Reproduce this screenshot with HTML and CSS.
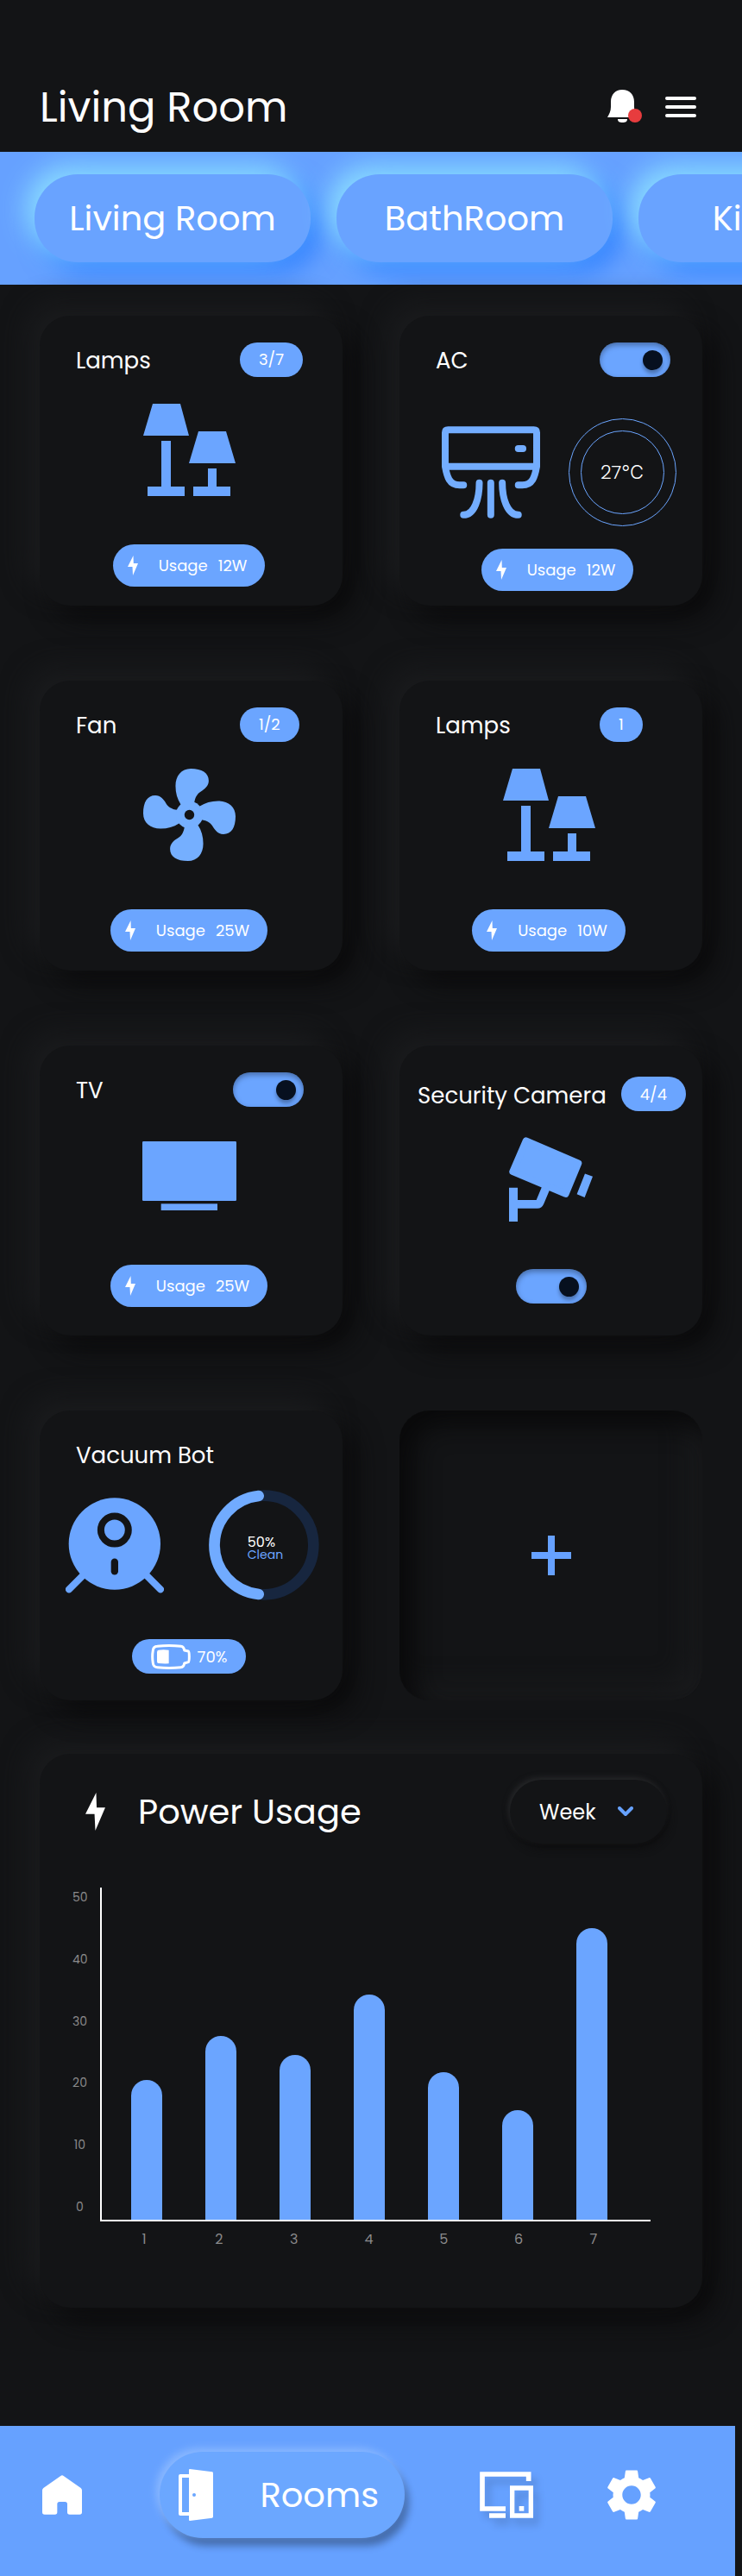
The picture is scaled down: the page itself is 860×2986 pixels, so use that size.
FILE: index.html
```html
<!DOCTYPE html>
<html lang="en">
<head>
<meta charset="utf-8">
<meta name="viewport" content="width=device-width, initial-scale=1">
<title>Living Room</title>
<link rel="stylesheet" href="styles.css">
</head>
<body>
<svg class="defs" width="0" height="0" aria-hidden="true">
  <symbol id="bolt" viewBox="0 0 12 23"><path d="M6.500 0L0 13H5.500L6 23L12 9H6.800Z"/></symbol>
  <symbol id="lamps" viewBox="0 0 107 107"><path d="M11 0H43L53 37H0ZM21 43H32V96H48V107H5V96H21ZM64 32H96L107 69H53ZM75 75H85V96H101V107H58V96H75Z"/></symbol>
</svg>

<header class="topbar">
  <h1 class="topbar-title">Living Room</h1>
  <div class="topbar-actions">
    <button class="icon-button" type="button" aria-label="Notifications">
      <svg width="42" height="40" viewBox="0 0 42 40"><path fill="#fff" d="M17 0C26 0 31 6 31 14V20C31 25 33 28 34 32H0C2 28 4 25 4 20V14C4 6 9 0 17 0ZM12 34H23C23 37 21 38 17.500 38S12 37 12 34Z"/><circle cx="32" cy="30" r="8" fill="#e73c3e"/></svg>
    </button>
    <button class="icon-button" type="button" aria-label="Menu">
      <svg width="36" height="24" viewBox="0 0 36 24"><path d="M2 2H34M2 12H34M2 22H34" stroke="#fff" stroke-width="4" stroke-linecap="round"/></svg>
    </button>
  </div>
</header>

<nav class="rooms" aria-label="Rooms">
  <a class="room" href="#living">Living Room</a>
  <a class="room" href="#bath">BathRoom</a>
  <a class="room" href="#kitchen">Kitchen</a>
</nav>

<main class="content">
  <section class="devices">
    <article class="card">
      <div class="card-head"><h2 class="card-title">Lamps</h2><span class="badge">3/7</span></div>
      <div class="card-figure"><svg class="glyph" width="107" height="107"><use href="#lamps"/></svg></div>
      <p class="usage"><svg class="bolt" width="12" height="23"><use href="#bolt"/></svg><span>Usage</span><span>12W</span></p>
    </article>

    <article class="card card-ac">
      <div class="card-head"><label class="card-title" for="ac">AC</label><input class="toggle" id="ac" type="checkbox" checked></div>
      <div class="card-figure">
        <svg width="114" height="107" viewBox="0 0 343 321" fill="none" stroke="#73adff" stroke-width="24" stroke-linecap="round" stroke-linejoin="round"><path d="M12 140V22Q12 12 22 12H321Q331 12 331 22V140ZM12 140C18 175 26 205 62 205H76M331 140C325 175 317 205 281 205H267M267 78H283M171 197V309M131 197C131 250 115 309 76 309M211 197C211 250 228 309 267 309"/></svg>
        <div class="dial"><div class="dial-inner">27℃</div></div>
      </div>
      <p class="usage"><svg class="bolt" width="12" height="23"><use href="#bolt"/></svg><span>Usage</span><span>12W</span></p>
    </article>

    <article class="card">
      <div class="card-head"><h2 class="card-title">Fan</h2><span class="badge">1/2</span></div>
      <div class="card-figure">
        <svg width="107" height="107" viewBox="0 0 320 320" fill="#75afff">
          <defs><path id="blade" d="M130 124C118 105 112 85 112 60C112 25 132 0 165 0C203 0 227 14 227 42C227 60 212 72 200 79C188 86 180 98 177 118L160 160Z"/></defs>
          <use href="#blade"/><use href="#blade" transform="rotate(90 160 160)"/><use href="#blade" transform="rotate(180 160 160)"/><use href="#blade" transform="rotate(270 160 160)"/>
          <circle cx="160" cy="160" r="47"/><circle cx="160" cy="160" r="17" fill="#131416"/>
        </svg>
      </div>
      <p class="usage"><svg class="bolt" width="12" height="23"><use href="#bolt"/></svg><span>Usage</span><span>25W</span></p>
    </article>

    <article class="card">
      <div class="card-head"><h2 class="card-title">Lamps</h2><span class="badge">1</span></div>
      <div class="card-figure"><svg class="glyph" width="107" height="107"><use href="#lamps"/></svg></div>
      <p class="usage"><svg class="bolt" width="12" height="23"><use href="#bolt"/></svg><span>Usage</span><span>10W</span></p>
    </article>

    <article class="card card-tv">
      <div class="card-head"><label class="card-title" for="tv">TV</label><input class="toggle" id="tv" type="checkbox" checked></div>
      <div class="card-figure"><svg class="glyph" width="109" height="80" viewBox="0 0 327 240"><rect width="327" height="207" rx="4"/><rect x="65" y="217" width="196" height="23"/></svg></div>
      <p class="usage"><svg class="bolt" width="12" height="23"><use href="#bolt"/></svg><span>Usage</span><span>25W</span></p>
    </article>

    <article class="card card-camera">
      <div class="card-head"><h2 class="card-title">Security Camera</h2><span class="badge">4/4</span></div>
      <div class="card-figure">
        <svg width="97" height="98" viewBox="0 0 290 293" fill="#6da8ff"><path d="M59 13L240 91L196 197L13 120Z" stroke="#6da8ff" stroke-width="24" stroke-linejoin="round"/><path d="M0 176H30V293H0ZM263 127L290 137L262 209L235 198Z"/><path d="M28 233H98Q104 233 107 226L127 178" fill="none" stroke="#6da8ff" stroke-width="29"/></svg>
      </div>
      <input class="toggle" type="checkbox" checked aria-label="Security Camera">
    </article>

    <article class="card card-vacuum">
      <div class="card-head"><h2 class="card-title">Vacuum Bot</h2></div>
      <div class="card-figure">
        <svg width="114" height="111" viewBox="0 0 343 332"><path d="M12 319L75 256M331 319L268 256" stroke="#6ba5ff" stroke-width="24" stroke-linecap="round"/><circle cx="171" cy="160" r="160" fill="#6ba5ff"/><circle cx="171" cy="112" r="48" fill="none" stroke="#131416" stroke-width="24"/><path d="M171 224V256" stroke="#131416" stroke-width="25" stroke-linecap="round"/></svg>
        <div class="progress">
          <svg width="128" height="128" viewBox="0 0 384 384" fill="none" stroke-width="38"><circle cx="192" cy="192" r="172" stroke="#17263f"/><path d="M173 21A172 172 0 0 0 173 363" stroke="#71abff" stroke-linecap="round"/></svg>
          <div class="progress-text"><span>50%</span><span class="progress-state">Clean</span></div>
        </div>
      </div>
      <p class="badge battery">
        <svg width="46" height="29" viewBox="0 0 138 87" fill="none" stroke="#fff" stroke-width="9" stroke-linejoin="round"><path d="M22 7Q62 2 104 7Q114 8 116 21L130 24Q133 26 133 43T130 62L116 66Q114 79 104 80Q62 85 22 80Q8 79 7 66Q3 43 7 21Q8 8 22 7Z"/><path d="M26 20Q43 18 62 20V67Q43 68 26 66Q21 66 21 60V28Q21 21 26 20Z" fill="#fff" stroke="none"/></svg>
        <span>70%</span>
      </p>
    </article>

    <button class="add" type="button" aria-label="Add device">
      <svg width="46" height="46" viewBox="0 0 46 46"><path d="M23 0V46M0 23H46" stroke="#66a1ff" stroke-width="8"/></svg>
    </button>
  </section>

  <section class="power">
    <div class="power-head">
      <svg class="bolt" width="23" height="44"><use href="#bolt"/></svg>
      <h2 class="power-title">Power Usage</h2>
      <div class="period">
        <select class="period-select" aria-label="Period"><option>Week</option><option>Month</option></select>
        <svg class="period-arrow" width="18" height="12" viewBox="0 0 18 12"><path d="M2 2L9 9L16 2" fill="none" stroke="#66a1ff" stroke-width="4" stroke-linecap="round" stroke-linejoin="round"/></svg>
      </div>
    </div>
    <div class="chart">
      <div class="y-labels"><span>50</span><span>40</span><span>30</span><span>20</span><span>10</span><span>0</span></div>
      <div class="bars">
        <div class="bar" style="height:42%"></div>
        <div class="bar" style="height:55.4%"></div>
        <div class="bar" style="height:49.7%"></div>
        <div class="bar" style="height:67.9%"></div>
        <div class="bar" style="height:44.5%"></div>
        <div class="bar" style="height:33.1%"></div>
        <div class="bar" style="height:87.7%"></div>
      </div>
      <div class="x-labels"><span>1</span><span>2</span><span>3</span><span>4</span><span>5</span><span>6</span><span>7</span></div>
    </div>
  </section>
</main>

<nav class="tabs" aria-label="Main">
  <a class="tab tab-home" href="#home" aria-label="Home"><svg width="46" height="46" viewBox="0 0 138 136"><path fill="#fff" d="M64 2Q69-2 74 2L134 44Q138 47 138 52V128Q138 136 130 136H95Q87 136 87 128V100Q87 92 79 92H60Q52 92 52 100V128Q52 136 44 136H8Q0 136 0 128V52Q0 47 4 44Z"/></svg></a>
  <a class="tab tab-active" href="#rooms">
    <svg width="40" height="60" viewBox="0 0 120 180"><path d="M40 24H6V156H40" fill="none" stroke="#fff" stroke-width="12" stroke-linejoin="round"/><path d="M39 0L117 10Q120 11 120 14V166Q120 169 117 170L39 180Q36 180 36 177V3Q36 0 39 0Z" fill="#fff"/><circle cx="54" cy="90" r="6" fill="#6ba7ff"/></svg>
    <span>Rooms</span>
  </a>
  <a class="tab" href="#devices" aria-label="Devices"><svg class="raised" width="62" height="54" viewBox="0 0 186 162"><path d="M90 129H9V9H170V33M33 153H90" fill="none" stroke="#fff" stroke-width="17"/><path d="M113 57H178V153H113Z" fill="none" stroke="#fff" stroke-width="16"/><path d="M137 120H154V137H137Z" fill="#fff"/></svg></a>
  <a class="tab" href="#settings" aria-label="Settings"><svg width="56" height="58" viewBox="2.600 2.400 18.800 19.200"><path fill="#fff" d="M19.140 12.940c.04-.3.060-.61.060-.94 0-.32-.02-.64-.07-.94l2.030-1.580c.18-.14.230-.41.120-.61l-1.920-3.320c-.12-.22-.37-.29-.59-.22l-2.390.96c-.5-.38-1.030-.7-1.620-.94l-.36-2.540c-.04-.24-.24-.41-.48-.41h-3.840c-.24 0-.43.170-.47.410l-.36 2.540c-.59.240-1.130.57-1.620.94l-2.390-.96c-.22-.08-.47 0-.59.220L2.740 8.870c-.12.210-.08.470.120.610l2.030 1.580c-.05.300-.09.630-.09.940s.02.640.07.940l-2.030 1.580c-.18.140-.23.410-.12.610l1.920 3.320c.12.220.37.290.59.220l2.390-.96c.5.380 1.030.7 1.620.94l.36 2.540c.05.240.24.410.48.410h3.840c.24 0 .44-.17.470-.41l.36-2.540c.59-.24 1.130-.56 1.620-.94l2.390.96c.22.080.47 0 .59-.22l1.920-3.320c.12-.22.070-.47-.12-.61l-2.010-1.580zM12 15.600c-1.980 0-3.600-1.620-3.600-3.600s1.620-3.600 3.600-3.600 3.600 1.620 3.600 3.600-1.620 3.600-3.600 3.600z"/></svg></a>
</nav>
</body>
</html>
```
FILE: styles.css
```css
:root {
  --bg: #131416;
  --blue: #6ba5ff;
  --bar: #66a1ff;
}

* { box-sizing: border-box; }

body {
  margin: 0;
  background: var(--bg);
  color: #fff;
  font-family: Poppins, Inter, "Open Sans", sans-serif;
  font-size: 18px;
}

h1, h2, p { margin: 0; font-weight: 400; }
a { color: inherit; text-decoration: none; }
button, select { font: inherit; color: inherit; border: 0; background: none; }
svg { display: block; flex: none; }
.defs { position: absolute; }
.glyph { fill: var(--blue); }
.bolt { fill: #fff; }

.topbar {
  display: flex;
  justify-content: space-between;
  align-items: center;
  padding: 92px 53px 20px 46px;
}
.topbar-title { padding-top: 2px; font-size: 48px; line-height: 62px; }
.topbar-actions { display: flex; align-items: center; gap: 25px; }
.icon-button { padding: 0; }

.rooms {
  display: flex;
  gap: 30px;
  padding: 26px 40px;
  background: var(--bar);
  overflow: hidden;
}
.room {
  flex: 0 0 320px;
  height: 102px;
  display: flex;
  align-items: center;
  justify-content: center;
  border-radius: 50px;
  background: #69a3ff;
  font-size: 40px;
  box-shadow: -10px -10px 30px #8bdcff, 10px 10px 30px #2b7cff;
}

.content { padding: 36px 46px 137px; }
.devices {
  display: grid;
  grid-template-columns: 1fr 1fr;
  gap: 87px 66px;
}
.card {
  display: flex;
  flex-direction: column;
  align-items: center;
  min-height: 336px;
  padding-bottom: 22px;
  border-radius: 35px;
  background: var(--bg);
  box-shadow: -15px -15px 30px #1a1b1d, 15px 15px 30px #0b0b0c;
}
.card-head {
  display: grid;
  grid-template-columns: 1fr 119px;
  align-items: center;
  justify-items: start;
  align-self: stretch;
  min-height: 71px;
  padding: 30px 0 0 42px;
}
.card-title { padding-top: 3px; font-size: 26px; line-height: 32px; white-space: nowrap; }
.card-figure {
  display: flex;
  align-items: center;
  justify-content: center;
  padding: 31px 5px 0 0;
}
.badge {
  display: flex;
  align-items: center;
  height: 40px;
  padding: 0 22px;
  border-radius: 20px;
  background: var(--blue);
}
.usage {
  display: flex;
  align-items: center;
  gap: 12px;
  height: 49px;
  margin: auto 5px 0 0;
  padding: 0 21px 0 17px;
  border-radius: 25px;
  background: var(--blue);
}
.usage .bolt { margin-right: 12px; }

.toggle {
  appearance: none;
  width: 82px;
  height: 40px;
  margin: 0;
  padding: 9px;
  border-radius: 20px;
  background: var(--blue);
  box-shadow: inset 0 3px 6px rgba(0, 0, 0, 0.35);
}
.toggle::before {
  content: "";
  display: block;
  width: 23px;
  height: 23px;
  border-radius: 50%;
  background: #07101f;
  box-shadow: 0 4px 4px rgba(0, 0, 0, 0.3);
}
.toggle:checked::before { margin-left: auto; }

.card-ac { padding-bottom: 17px; }
.card-ac .card-figure { gap: 33px; padding: 48px 0 0 18px; }
.card-ac .usage { margin: auto 0 0 15px; }
.dial {
  width: 125px;
  height: 125px;
  padding: 13px;
  border: 1px solid var(--blue);
  border-radius: 50%;
}
.dial-inner {
  display: flex;
  align-items: center;
  justify-content: center;
  height: 100%;
  border: 1px solid var(--blue);
  border-radius: 50%;
  font-size: 22px;
  font-weight: 300;
}

.card-tv { padding-bottom: 33px; }
.card-tv .card-head { grid-template-columns: 1fr 127px; }
.card-tv .card-figure { padding-top: 40px; }

.card-camera { padding-bottom: 37px; }
.card-camera .card-head {
  grid-template-columns: 1fr auto;
  padding: 36px 19px 0 21px;
}
.card-camera .card-figure { padding: 30px 0 0; }
.card-camera > .toggle { margin-top: auto; }

.card-vacuum { padding-bottom: 31px; }
.card-vacuum .card-figure { gap: 52px; padding: 21px 0 0 2px; }
.progress { display: grid; place-items: center; }
.progress > * { grid-area: 1 / 1; }
.progress-text {
  display: flex;
  flex-direction: column;
  padding: 8px 0 0 4px;
  font-size: 16px;
  line-height: 14px;
}
.progress-state { color: var(--blue); font-size: 14px; }
.battery { gap: 8px; margin: auto 5px 0 0; }

.add {
  display: flex;
  align-items: center;
  justify-content: center;
  border-radius: 35px;
  background: var(--bg);
  box-shadow: inset 15px 15px 30px #09090a, inset -15px -15px 30px #1a1b1d;
}

.power {
  margin-top: 62px;
  padding: 30px 41px 67px 38px;
  border-radius: 35px;
  background: var(--bg);
  box-shadow: -15px -15px 30px #1a1b1d, 15px 15px 30px #0b0b0c;
}
.power-head { display: flex; align-items: center; padding-left: 15px; }
.power-title { margin: 0 auto 0 38px; font-size: 40px; }
.period { position: relative; }
.period-select {
  appearance: none;
  width: 182px;
  height: 74px;
  padding: 0 34px;
  border-radius: 37px;
  background: var(--bg);
  font-size: 24px;
  box-shadow: -2px -3px 6px #252628, 2px 6px 10px #0e0e0f;
}
.period-arrow {
  position: absolute;
  top: 31px;
  right: 39px;
  pointer-events: none;
}

.chart {
  display: grid;
  grid-template-columns: 32px 1fr;
  padding: 51px 19px 0 0;
  color: #8a8a8b;
}
.y-labels {
  display: flex;
  flex-direction: column;
  justify-content: space-between;
  align-items: flex-start;
  padding-bottom: 6px;
  font-size: 14px;
  line-height: 22px;
}
.y-labels span { min-width: 17px; text-align: center; }
.bars {
  display: flex;
  align-items: flex-end;
  justify-content: space-between;
  height: 387px;
  padding: 0 50px 0 34px;
  border-left: 2px solid #fff;
  border-bottom: 2px solid #fff;
}
.bar {
  width: 36px;
  border-radius: 18px 18px 0 0;
  background: var(--blue);
}
.x-labels {
  grid-column: 2;
  display: flex;
  justify-content: space-between;
  padding: 9px 48px 0 33px;
  font-size: 16px;
  line-height: 24px;
}
.x-labels span { width: 36px; text-align: center; }

.tabs {
  display: flex;
  align-items: center;
  justify-content: space-between;
  height: 174px;
  margin-right: 8px;
  padding: 0 92px 14px 49px;
  background: var(--bar);
}
.tab-active {
  display: flex;
  align-items: center;
  gap: 54px;
  height: 100px;
  padding: 0 30px 0 22px;
  border-radius: 50px;
  background: #6ba7ff;
  font-size: 40px;
  box-shadow: -4px -4px 10px #8ab8ff, 5px 9px 9px rgba(0, 0, 0, 0.32);
}
.tab-home { padding-right: 4px; }
.raised { filter: drop-shadow(6px 8px 4px rgba(0, 0, 0, 0.15)); }
```
